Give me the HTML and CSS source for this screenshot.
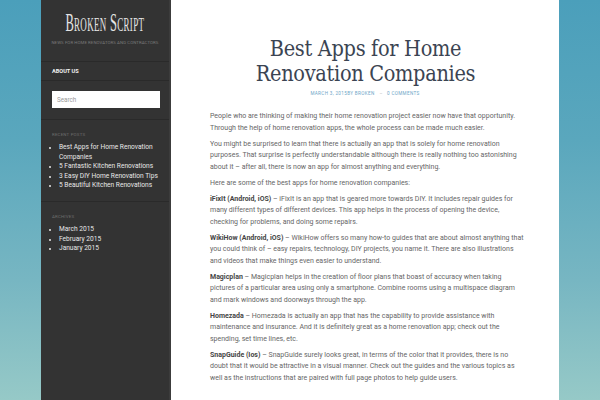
FILE: index.html
```html
<!DOCTYPE html>
<html lang="en">
<head>
<meta charset="utf-8">
<title>Best Apps for Home Renovation Companies – Broken Script</title>
<link rel="stylesheet" href="styles.css">
</head>
<body>
<div class="page">
  <aside class="sidebar">
    <header class="brand">
      <div class="logo"><span class="logo-text">Broken Script</span></div>
      <div class="tagline">News for home renovators and contractors</div>
    </header>
    <nav class="menu"><a href="#">About us</a></nav>
    <div class="search"><input type="text" placeholder="Search"></div>
    <section class="widget">
      <h3>Recent Posts</h3>
      <ul>
        <li>Best Apps for Home Renovation Companies</li>
        <li>5 Fantastic Kitchen Renovations</li>
        <li>3 Easy DIY Home Renovation Tips</li>
        <li>5 Beautiful Kitchen Renovations</li>
      </ul>
    </section>
    <section class="widget">
      <h3>Archives</h3>
      <ul>
        <li>March 2015</li>
        <li>February 2015</li>
        <li>January 2015</li>
      </ul>
    </section>
  </aside>
  <main class="content">
    <h1 class="post-title">Best Apps for Home Renovation Companies</h1>
    <div class="meta"><span>March 3, 2015</span><span>by Broken</span><span class="sep">–</span><span>0 Comments</span></div>
    <p>People who are thinking of making their home renovation project easier now have that opportunity. Through the help of home renovation apps, the whole process can be made much easier.</p>
    <p>You might be surprised to learn that there is actually an app that is solely for home renovation purposes. That surprise is perfectly understandable although there is really nothing too astonishing about it – after all, there is now an app for almost anything and everything.</p>
    <p>Here are some of the best apps for home renovation companies:</p>
    <p><strong>iFixIt (Android, iOS)</strong> – iFixIt is an app that is geared more towards DIY. It includes repair guides for many different types of different devices. This app helps in the process of opening the device, checking for problems, and doing some repairs.</p>
    <p><strong>WikiHow (Android, iOS)</strong> – WikiHow offers so many how-to guides that are about almost anything that you could think of – easy repairs, technology, DIY projects, you name it. There are also illustrations and videos that make things even easier to understand.</p>
    <p><strong>Magicplan</strong> – Magicplan helps in the creation of floor plans that boast of accuracy when taking pictures of a particular area using only a smartphone. Combine rooms using a multispace diagram and mark windows and doorways through the app.</p>
    <p><strong>Homezada</strong> – Homezada is actually an app that has the capability to provide assistance with maintenance and insurance. And it is definitely great as a home renovation app; check out the spending, set time lines, etc.</p>
    <p><strong>SnapGuide (Ios)</strong> – SnapGuide surely looks great, in terms of the color that it provides, there is no doubt that it would be attractive in a visual manner. Check out the guides and the various topics as well as the instructions that are paired with full page photos to help guide users.</p>
  </main>
</div>
</body>
</html>
```
FILE: styles.css
```css
* { box-sizing: border-box; }
html, body { margin: 0; padding: 0; }
body {
  height: 400px;
  overflow: hidden;
  background: linear-gradient(180deg, #4b9fbb 0%, #5aa7bd 35%, #77b6c2 70%, #96c9c7 100%);
  font-family: Roboto, "Liberation Sans", sans-serif;
}
.page {
  display: flex;
  margin: 0 41px;
  height: 400px;
}
.sidebar {
  width: 130px;
  flex: none;
  background: #333333;
  border-right: 2px solid #3c3c3c;
  color: #e6e6e6;
}
.brand {
  padding: 9px 6px 0;
  height: 61px;
  text-align: center;
}
.logo {
  height: 28px;
  display: flex;
  justify-content: center;
}
.logo-text {
  display: inline-block;
  font-family: "Liberation Serif", serif;
  font-variant: small-caps;
  font-size: 25px;
  line-height: 28px;
  color: #e4e4e4;
  white-space: nowrap;
  transform: scaleX(0.5);
  transform-origin: center;
  letter-spacing: 0.6px;
}
.tagline {
  margin-top: 3px;
  font-size: 4.3px;
  text-transform: uppercase;
  color: #7a7a7a;
  letter-spacing: 0.1px;
  white-space: nowrap;
}
.menu {
  border-top: 1px solid #2a2a2a;
  border-bottom: 1px solid #2a2a2a;
  height: 20px;
  padding: 0 11px;
  display: flex;
  align-items: center;
}
.menu a {
  color: #f0f0f0;
  text-decoration: none;
  font-size: 5.6px;
  font-weight: 700;
  text-transform: uppercase;
}
.search {
  padding: 10px 11px 11px;
  border-bottom: 1px solid #2a2a2a;
}
.search input {
  display: block;
  width: 108px;
  height: 17px;
  border: 0;
  margin: 0;
  padding: 0 5px;
  background: #fff;
  font-family: Roboto, "Liberation Sans", sans-serif;
  font-size: 6.3px;
  color: #999;
}
.search input::placeholder { color: #9a9a9a; }
.widget {
  padding: 12px 11px 10px;
  border-bottom: 1px solid #2a2a2a;
}
.widget:last-child { border-bottom: 0; }
.widget h3 {
  margin: 0 0 5px;
  font-size: 4.4px;
  font-weight: 400;
  text-transform: uppercase;
  color: #6e6e6e;
  letter-spacing: 0.2px;
  line-height: 6px;
}
.widget ul {
  margin: 0;
  padding: 0 0 0 7px;
  list-style: square;
  font-size: 6.6px;
  line-height: 9.6px;
  color: #e8e8e8;
}
.widget li::marker { font-size: 5px; color: #bbb; }
.content {
  flex: 1;
  background: #fff;
  padding: 36px 34px 0 39px;
  color: #666666;
}
.post-title {
  margin: 0 0 0 calc(50% - 137px);
  font-family: "DejaVu Serif", serif;
  font-stretch: condensed;
  font-weight: 400;
  font-size: 21.5px;
  line-height: 25px;
  letter-spacing: -0.3px;
  color: #3b4452;
  text-align: center;
  width: 270px;
}
.meta {
  margin: 5px 0 14px;
  padding-right: 5px;
  text-align: center;
  font-size: 4.6px;
  text-transform: uppercase;
  letter-spacing: 0.35px;
  color: #6ea6c8;
  line-height: 6px;
}
.meta .sep { color: #bbb; margin: 0 4px 0 5px; }
.content p {
  margin: 0 0 4.5px;
  font-size: 7px;
  line-height: 11.5px;
}
.content strong { color: #454545; font-weight: 700; }
```
